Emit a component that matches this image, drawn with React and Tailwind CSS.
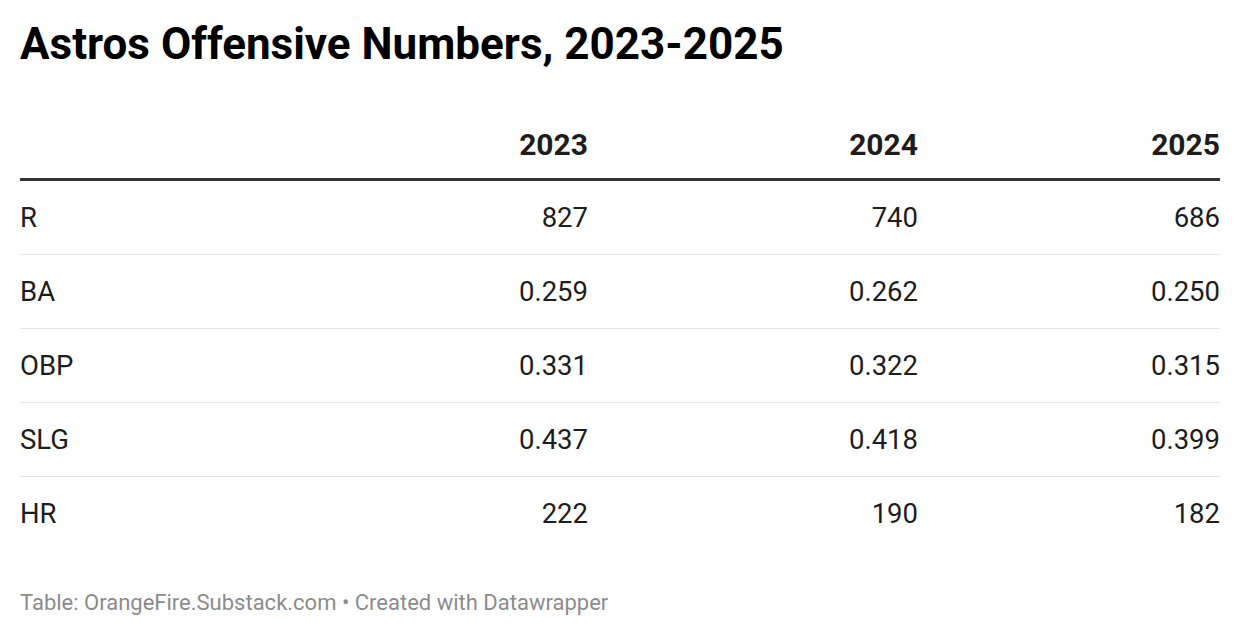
export default function App() {
  const rows = [
    ["R", "827", "740", "686"],
    ["BA", "0.259", "0.262", "0.250"],
    ["OBP", "0.331", "0.322", "0.315"],
    ["SLG", "0.437", "0.418", "0.399"],
    ["HR", "222", "190", "182"],
  ];
  return (
    <div className="w-[1240px] h-[636px] bg-white px-5 pt-[18px] text-[#1d1d1d]" style={{ fontFamily: "Roboto, 'Liberation Sans', sans-serif" }}>
      <h1 className="text-[44px] leading-[52px] font-bold text-black">Astros Offensive Numbers, 2023-2025</h1>
      <div className="mt-[57px]">
        <div className="grid grid-cols-[258px_310px_330px_302px] border-b-[3px] border-[#333333] h-[54px] items-start pt-[2px]">
          <div></div>
          <div className="text-right text-[30px] font-bold leading-[32px]">2023</div>
          <div className="text-right text-[30px] font-bold leading-[32px]">2024</div>
          <div className="text-right text-[30px] font-bold leading-[32px]">2025</div>
        </div>
        {rows.map((r, i) => (
          <div key={r[0]} className={`grid grid-cols-[258px_310px_330px_302px] h-[74px] items-center text-[27.5px] leading-[32px] ${i < rows.length - 1 ? "border-b border-[#e6e6e6]" : ""}`}>
            <div>{r[0]}</div>
            <div className="text-right">{r[1]}</div>
            <div className="text-right">{r[2]}</div>
            <div className="text-right">{r[3]}</div>
          </div>
        ))}
      </div>
      <div className="mt-[39px] text-[22px] leading-[26px] text-[#8c8c8c]">Table: OrangeFire.Substack.com • Created with Datawrapper</div>
    </div>
  );
}
